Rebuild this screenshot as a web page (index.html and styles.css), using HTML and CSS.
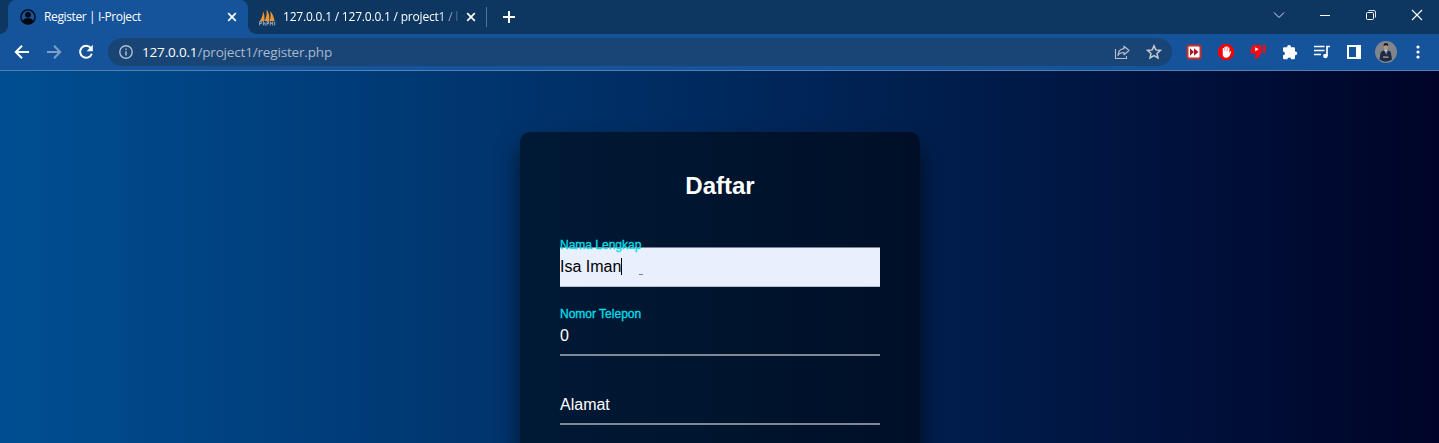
FILE: index.html
```html
<!DOCTYPE html>
<html lang="id">
<head>
<meta charset="utf-8">
<title>Register | I-Project</title>
<link rel="stylesheet" href="styles.css">
</head>
<body>
<header class="browser">
  <div class="tabstrip">
    <div class="tab tab-active">
      <svg class="favicon" width="16" height="16" viewBox="0 0 16 16"><circle cx="8" cy="8" r="7.1" fill="none" stroke="#05080f" stroke-width="1.4"/><circle cx="8" cy="5.8" r="2.8" fill="#05080f"/><path d="M2.8 12.5C3.5 9.7 5.4 9.2 8 9.2s4.500.5 5.200 3.300C12 14.300 10 15 8 15s-4-.7-5.200-2.500z" fill="#05080f"/></svg>
      <span class="tab-title title-register">Register | I-Project</span>
      <svg class="close" width="10" height="10" viewBox="0 0 10 10"><path d="M1.200 1.200l7.600 7.600M8.800 1.200L1.200 8.800" stroke="#fff" stroke-width="1.700"/></svg>
    </div>
    <div class="tab tab-idle">
      <svg class="favicon" width="17" height="17" viewBox="0 0 17 17"><path d="M1 12C3 8.500 4 5.500 4.200 2.500c1.300 2.500 1.500 6 1.200 9.500zM5.600 12c1.800-3.500 2.400-7 2-11.500 2.400 3 3.200 8 2.800 11.500zM10.800 12c.8-3 1.100-6 .4-10 2.500 2.400 3.900 7 4.300 10z" fill="#f0962e"/><path d="M.6 16.500v-4h1.800v2H.6M4.300 12v4.500m0-2.500h1.800v2.500M8 16.500v-4h1.600v2H8M11.300 16.500v-3.800l1.200 2 1.200-2v3.800M15.700 12.500v4" fill="none" stroke="#98a3bf" stroke-width="1"/></svg>
      <span class="tab-title title-db">127.0.0.1 / 127.0.0.1 / project1 / l</span>
      <svg class="close" width="10" height="10" viewBox="0 0 10 10"><path d="M1.200 1.200l7.600 7.600M8.800 1.200L1.200 8.800" stroke="#fff" stroke-width="1.700"/></svg>
    </div>
    <svg class="new-tab" width="12" height="12" viewBox="0 0 12 12"><path d="M6 0v12M0 6h12" stroke="#fff" stroke-width="2"/></svg>
    <div class="window-controls">
      <svg width="12" height="12" viewBox="0 0 12 12"><path d="M1 3.500l5 5 5-5" fill="none" stroke="#dbe3ec" stroke-width="1"/></svg>
      <svg width="12" height="12" viewBox="0 0 12 12"><path d="M1 6.500h10" stroke="#fff"/></svg>
      <svg width="12" height="12" viewBox="0 0 12 12"><rect x="1.500" y="3.500" width="7" height="7" rx="1" fill="none" stroke="#fff"/><path d="M3.500 1.500H9A1.500 1.500 0 0 1 10.500 3v5.500" fill="none" stroke="#dbe3ec"/></svg>
      <svg width="12" height="12" viewBox="0 0 12 12"><path d="M1 1l10 10M11 1L1 11" stroke="#fff" stroke-width="1.100"/></svg>
    </div>
  </div>
  <div class="toolbar">
    <div class="nav">
      <svg width="16" height="16" viewBox="0 0 16 16"><path d="M15 8H2.500M8 1.800L1.800 8 8 14.200" fill="none" stroke="#fff" stroke-width="2"/></svg>
      <svg width="16" height="16" viewBox="0 0 16 16"><path d="M1 8h12.500M8 1.800L14.200 8 8 14.200" fill="none" stroke="#7d9fc9" stroke-width="2"/></svg>
      <svg width="16" height="16" viewBox="0 0 16 16"><path d="M12.800 4A6 6 0 1 0 13.800 9.700" fill="none" stroke="#fff" stroke-width="2"/><path d="M14.800.8v6.400H8.600z" fill="#fff"/></svg>
    </div>
    <div class="address">
      <svg width="14" height="14" viewBox="0 0 14 14"><circle cx="7" cy="7" r="6.200" fill="none" stroke="#b0bfd0" stroke-width="1.400"/><path d="M7 6.200v4.300M7 3.500V5" stroke="#b0bfd0" stroke-width="1.500"/></svg>
      <span class="url"><b class="host">127.0.0.1</b>/project1/register.php</span>
      <svg class="share" width="16" height="16" viewBox="0 0 16 16"><path d="M1.500 5v9.500h11V12" fill="none" stroke="#b8bfca" stroke-width="1.100"/><path d="M10 2.200L15 6.500l-5 4.200V8.500C7 8.500 5.200 9.200 4 11.500c.1-4 2.400-6.500 6-6.900z" fill="none" stroke="#b8bfca" stroke-width="1.200" stroke-linejoin="round"/></svg>
      <svg width="16" height="16" viewBox="0 0 16 16"><path d="M8 1.900l1.800 4 4.600.5-3.400 3 1 4.500L8 11.600l-4 2.300 1-4.500-3.400-3 4.600-.5z" fill="none" stroke="#c6c9cf" stroke-width="1.500"/></svg>
    </div>
    <div class="extensions">
      <svg width="16" height="16" viewBox="0 0 16 16"><rect x=".5" y=".5" width="15" height="15" rx="2.500" fill="#c92c2c"/><rect x="2.500" y="2.500" width="11" height="11" rx="1" fill="#fff"/><path d="M4 4.200L8 8l-4 3.800zM8 4.200L12.500 8 8 11.800z" fill="#a71b20"/></svg>
      <svg width="16" height="16" viewBox="0 0 16 16"><path d="M4.700 0h6.600L16 4.700v6.600L11.300 16H4.700L0 11.300V4.700z" fill="#e8080d"/><path d="M4.700 8V4.300q.8-.8 1.400 0V7h.3V2.900q.8-.8 1.500 0V7h.3V2.500q.8-.7 1.500 0V7.200h.3V3.700q.8-.7 1.400 0v5l.8-1.200q1-.5 1.100.3L11.500 12q-1 1.700-3.300 1.700-3.500 0-3.500-3.700z" fill="#fff"/></svg>
      <svg width="16" height="16" viewBox="0 0 16 16"><path d="M2.500 1H11.500v8L7.500 14.500H4.500L6 9.500H1L0 7.500zM13 1h2.600v8H13z" fill="#f90910"/><path d="M5.200 3.200l3.500 2-3.500 2z" fill="#fff"/></svg>
      <svg width="16" height="16" viewBox="0 0 16 16"><path d="M2.300 3.200H5.200V2.800a1.900 1.900 0 0 1 3.800 0v.4h2.700q1.300 0 1.300 1.300v2.900h.4a1.900 1.900 0 0 1 0 3.800H13V14q0 1.300-1.300 1.300H9.200a1.900 1.900 0 0 0-3.800 0H2.300Q1 15.300 1 14v-2.700a1.900 1.900 0 0 0 0-3.800v-3Q1 3.200 2.300 3.200z" fill="#fff"/></svg>
      <svg width="16" height="16" viewBox="0 0 16 16"><path d="M0 2.500h10.500M0 6.500h10.500M0 10.500h7M13 12V2.500h3" fill="none" stroke="#fff" stroke-width="1.700"/><circle cx="11.400" cy="12" r="2.300" fill="#fff"/></svg>
      <svg width="16" height="16" viewBox="0 0 16 16"><path d="M2 2h12v12H2z" fill="none" stroke="#fff" stroke-width="2"/><path d="M10 1h5v14h-5z" fill="#fff"/></svg>
      <svg class="avatar" width="22" height="22" viewBox="0 0 22 22"><circle cx="11" cy="11" r="11" fill="#7f868c"/><path d="M4.500 18.500l1-6.500Q6 9.800 9.500 9h3Q15.500 9.800 16 12l1 6.500a11 11 0 0 1-12.500 0z" fill="#1d2b49"/><path d="M9 8.800h3.600l-1 5.400z" fill="#e1e6ed"/><path d="M10.600 9.800h.7l.4 3.800-.8.800z" fill="#182747"/><ellipse cx="10.800" cy="6" rx="2" ry="2.800" fill="#c0937c"/><path d="M8.700 5.200Q8.300 2 11 2t2 3.200q-2-1.700-4.300 0z" fill="#151922"/><path d="M8 16l5.500.3" stroke="#b88b75" stroke-width="1.500"/></svg>
      <svg class="menu" width="4" height="14" viewBox="0 0 4 14"><circle cx="2" cy="2" r="1.600" fill="#fff"/><circle cx="2" cy="7" r="1.600" fill="#fff"/><circle cx="2" cy="12" r="1.600" fill="#fff"/></svg>
    </div>
  </div>
</header>
<main class="page">
  <form class="card">
    <h2 class="heading">Daftar</h2>
    <div class="field filled">
      <div class="input autofill">Isa Iman<span class="caret"></span><span class="pointer"></span></div>
      <label class="label">Nama Lengkap</label>
    </div>
    <div class="field filled">
      <div class="input">0</div>
      <label class="label">Nomor Telepon</label>
    </div>
    <div class="field">
      <div class="input"></div>
      <label class="label">Alamat</label>
    </div>
  </form>
</main>
</body>
</html>
```

FILE: styles.css
```css
* { box-sizing: border-box; }
body { margin: 0; height: 443px; overflow: hidden; display: flex; flex-direction: column; font-family: "Liberation Sans", Arial, sans-serif; }
svg { display: block; flex: none; }
.browser { flex: none; font-family: "Open Sans", "Segoe UI", sans-serif; color: #fff; }
.tabstrip { height: 34px; display: flex; align-items: center; background: #0d3660; padding-left: 8px; }
.tab { height: 34px; display: flex; align-items: center; font-size: 12px; white-space: nowrap; }
.tab-active { position: relative; width: 240px; padding: 0 11px 0 12px; background: #15539a; border-radius: 8px 8px 0 0; }
.tab-active::before, .tab-active::after { content: ""; position: absolute; bottom: 0; width: 8px; height: 8px; }
.tab-active::before { left: -8px; background: radial-gradient(circle at 0 0, transparent 7.5px, #15539a 8px); }
.tab-active::after { right: -8px; background: radial-gradient(circle at 100% 0, transparent 7.5px, #15539a 8px); }
.tab-idle { width: 239px; height: 20px; padding: 0 10px 0 11px; border-right: 1px solid #557292; }
.tab-title { flex: 1; line-height: 20px; }
.title-register { margin-left: 8px; letter-spacing: -.38px; }
.title-db { margin: 0 7px; letter-spacing: -.2px; -webkit-mask-image: linear-gradient(to right, #000 156px, transparent 180px); mask-image: linear-gradient(to right, #000 156px, transparent 180px); }
.new-tab { margin-left: 16px; }
.window-controls { margin: -5px 16px 0 auto; display: flex; gap: 34px; }
.toolbar { height: 37px; padding-bottom: 1px; display: flex; align-items: center; background: #15539a; border-bottom: 1px solid #5080b4; }
.nav { display: flex; gap: 16px; padding-left: 14px; width: 108px; }
.address { width: 1064px; height: 28px; border-radius: 14px; background: #194576; display: flex; align-items: center; padding: 0 10px 0 11px; }
.url { margin-left: 9px; flex: 1; font-size: 13.500px; letter-spacing: -.17px; line-height: 20px; color: #a8b9cc; }
.host { font-weight: 400; color: #fff; }
.share { margin-right: 16px; }
.extensions { flex: 1; display: flex; align-items: center; gap: 16px; padding-left: 14px; }
.avatar { margin: 0 -3px; }
.menu { margin-left: 6px; }
.page { flex: 1; min-height: 0; overflow: hidden; padding: 60.5px 0 0 1px; display: flex; justify-content: center; align-items: flex-start; background: linear-gradient(to right, #004e92, #000428); }
.card { width: 400px; height: 620px; flex: none; padding: 40.5px 40px 40px; border-radius: 10px; background: rgba(0,0,0,.5); box-shadow: 0 15px 25px rgba(0,0,0,.6); }
.heading { margin: 0 0 47px; font-size: 24px; line-height: 28px; text-align: center; color: #fff; }
.field { position: relative; height: 69px; }
.input { position: relative; height: 40px; padding-top: 10px; font-size: 16px; line-height: 19px; color: #fff; border-bottom: 2px solid #7f8996; }
.label { position: absolute; left: 0; top: 10px; font-size: 16px; line-height: 19px; color: #fff; }
.filled .label { top: -9px; font-size: 12px; line-height: 14px; color: #03dbe5; -webkit-text-stroke: .35px #03dbe5; }
.autofill { color: #000; background: #e8effd; border-top: 1px solid #7b8396; border-bottom: 1px solid #b7bfcc; padding-top: 9px; }
.caret { display: inline-block; width: 1px; height: 17px; background: #000; vertical-align: -3px; }
.pointer { position: absolute; left: 79px; top: 26px; width: 4px; height: 1px; background: #777e8b; }
```
